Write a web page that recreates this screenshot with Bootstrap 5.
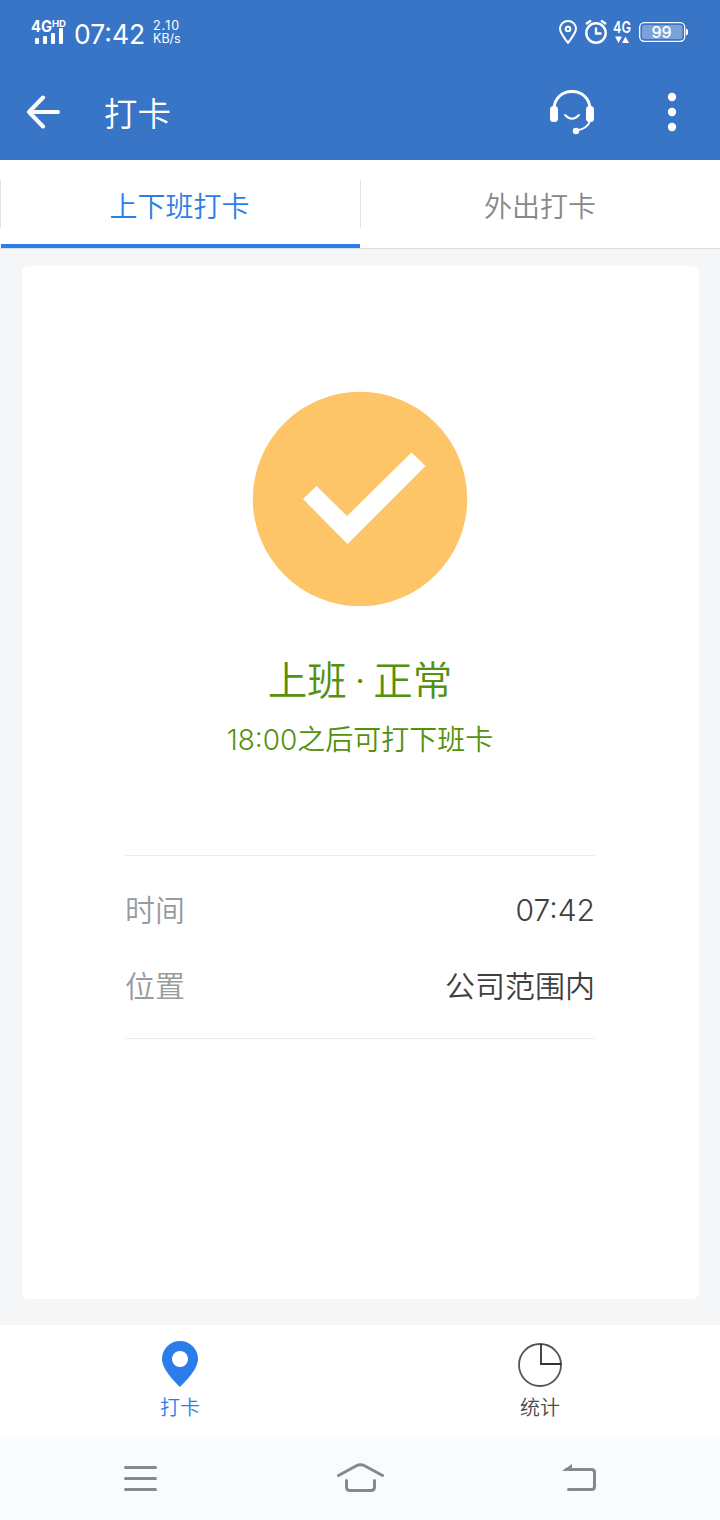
<!DOCTYPE html>
<html lang="zh-CN">
<head>
<meta charset="utf-8">
<meta name="viewport" content="width=device-width, initial-scale=1">
<title>打卡</title>
<link href="https://cdn.jsdelivr.net/npm/bootstrap@5.3.0/dist/css/bootstrap.min.css" rel="stylesheet">
<style>
  body { font-family: Inter, "Noto Sans CJK SC", sans-serif; font-weight: 350; line-height: 1; background: #f4f6f8; height: 1520px; overflow: hidden; }
  svg { display: block; flex: none; }
  .top-blue { background: #3975c6; color: #fff; }
  .status { height: 64px; padding: 0 31px; }
  .clock { font-size: 26.5px; font-weight: 400; line-height: 32px; margin-left: 7px; width: 79px; white-space: nowrap; }
  .speed { font-size: 12.5px; font-weight: 400; line-height: 13px; }
  .speed .rate { letter-spacing: 1px; }
  .title-bar { height: 96px; padding: 0 43px 0 27px; }
  .title-text { font-size: 33.5px; line-height: 40px; margin: 4px 0 0 44px; }
  .tabs { height: 89px; border-bottom: 1px solid #dcdddf; font-size: 28px; }
  .tab-item { height: 88px; padding-top: 2px; line-height: 90px; border-bottom: 4px solid transparent; color: #888; }
  .tab-item.on { color: #2b7de9; border-color: #2b7de9; margin-left: 1px; padding-right: 2px; }
  .tab-item.on { width: 359px; }
  .tabs .sep { width: 1px; height: 48px; background: #e3e3e3; margin-top: 20px; }
  .result { margin: 17px 21px 0 22px; height: 1033px; border-radius: 6px; padding: 125px 104px 0 103px; }
  .headline { font-size: 39.5px; line-height: 48px; margin-top: 51px; color: #53910f; word-spacing: -3.5px; }
  .hint { font-size: 28px; line-height: 36px; margin-top: 17px; color: #53910f; white-space: nowrap; }
  .facts { border-top: 1px solid #ececec; border-bottom: 1px solid #ececec; margin-top: 97px; height: 184px; padding-top: 34px; font-size: 30px; line-height: 40px; gap: 36px; color: #3f3f42; }
  .facts .key { color: #979b9d; }
  .bottom-tabs { margin-top: 26px; height: 111px; font-size: 20px; line-height: 24px; color: #4b4b4b; }
  .bottom-tabs .on { color: #2b7de9; }
  .bottom-tabs .pic { height: 71px; padding-top: 16px; }
  .sys { height: 84px; background: #f9fcfe; padding: 0 122px; }
</style>
</head>
<body>
<header class="top-blue">
  <div class="status d-flex align-items-center">
    <svg width="36" height="30" viewBox="31 16 36 30" fill="#fff">
      <text x="31" y="31" font-size="16" font-weight="700" textLength="21" lengthAdjust="spacingAndGlyphs">4G</text>
      <text x="52" y="26" font-size="9" font-weight="700" textLength="14" lengthAdjust="spacingAndGlyphs">HD</text>
      <rect x="35" y="37" width="4" height="6" rx="1"/><rect x="43" y="35" width="4" height="8" rx="1"/><rect x="51" y="32" width="4" height="11" rx="1"/><rect x="59" y="27" width="4" height="16" rx="1"/>
    </svg>
    <div class="clock mt-1">07:42</div>
    <div class="speed"><div class="rate">2.10</div><div>KB/s</div></div>
    <svg class="ms-auto" width="132" height="28" viewBox="557 18 132 28" fill="none" stroke="#fff" stroke-width="2">
      <path d="M568 43C564 37 560 33 560 28.500A8 7.500 0 0 1 576 28.500C576 33 572 37 568 43Z" stroke-linejoin="round"/>
      <circle cx="568" cy="29" r="2.300"/>
      <circle cx="596" cy="33" r="9.700" stroke-width="2.500"/><path d="M596 27.500V33.500H601.500M586 24L591 20.500M606 24L601 20.500" stroke-width="2.300"/>
      <g fill="#fff" stroke="none"><text x="613" y="33" font-size="16" font-weight="600" textLength="18" lengthAdjust="spacingAndGlyphs">4G</text><path d="M615 36.500h7l-3.500 6.500zM622 43h7l-3.500-6.500z"/></g>
      <rect x="639.700" y="22.700" width="45" height="18.600" rx="4.500" stroke-width="1.300"/><rect x="642" y="25" width="40.500" height="14" rx="2.500" fill="#7ba1d9" stroke="none"/>
      <path d="M686 28.500q2.500 1 2 3.500q.5 2.500-2 3.500z" fill="#fff" stroke="none"/>
      <text x="651.500" y="38" font-size="16" fill="#fff" stroke="none" font-weight="500" textLength="20">99</text>
    </svg>
  </div>
  <div class="title-bar d-flex align-items-center">
    <svg width="33" height="34" viewBox="0 0 33 34" fill="none" stroke="#fff" stroke-width="4" stroke-linecap="round" stroke-linejoin="round"><path d="M31 17H2M16 2.500L2 17L16 31.500"/></svg>
    <div class="title-text">打卡</div>
    <svg class="ms-auto" width="46" height="46" viewBox="549 89 46 46" fill="none" stroke="#fff">
      <path d="M554 108C555 98 562 91.500 572 91.500S589 98 590 108" stroke-width="3"/>
      <rect x="550" y="106" width="8" height="16" rx="3.500" fill="#fff" stroke="none"/><rect x="586" y="106" width="8" height="16" rx="3.500" fill="#fff" stroke="none"/>
      <path d="M565 115Q572 122.500 579 115" stroke-width="2" stroke-linecap="round"/><path d="M590 121C588 127 584 129.500 576 130.500" stroke-width="2"/><circle cx="576" cy="131" r="3.200" fill="#fff" stroke="none"/>
    </svg>
    <svg class="more" style="margin-left:72px" width="10" height="40" fill="#fff"><circle cx="5" cy="5" r="4.200"/><circle cx="5" cy="20" r="4.200"/><circle cx="5" cy="35" r="4.200"/></svg>
  </div>
</header>
<nav class="tabs d-flex bg-white text-center position-relative">
  <div class="sep position-absolute start-0"></div>
  <div class="tab-item on flex-shrink-0">上下班打卡</div>
  <div class="sep position-absolute start-50"></div>
  <div class="tab-item flex-fill">外出打卡</div>
</nav>
<main class="result bg-white text-center">
  <svg class="mx-auto" width="216" height="215" viewBox="252 391 216 215"><circle cx="360" cy="499" r="107.200" fill="#fec568"/><path d="M303 499L316.500 486L347 516L411.500 452.500L425.500 466L347.500 544Z" fill="#fff"/></svg>
  <div class="headline">上班 · 正常</div>
  <div class="hint">18:00之后可打下班卡</div>
  <div class="facts d-flex flex-column">
    <div class="d-flex justify-content-between"><span class="key">时间</span><span>07:42</span></div>
    <div class="d-flex justify-content-between"><span class="key">位置</span><span>公司范围内</span></div>
  </div>
</main>
<div class="bottom-tabs d-flex bg-white text-center">
  <div class="w-50 on"><div class="pic"><svg class="mx-auto" width="36" height="46" viewBox="0 0 36 46"><path fill-rule="evenodd" fill="#2b7de9" d="M18 46C12 40 0 28 0 18A18 18 0 0 1 36 18C36 28 24 40 18 46ZM18 10a8 8 0 1 0 .01 0Z"/></svg></div>打卡</div>
  <div class="w-50"><div class="pic"><svg class="mx-auto" width="46" height="46" viewBox="517 1341 46 46" fill="none" stroke="#555" stroke-width="1.800"><circle cx="540" cy="1365" r="21"/><path d="M541 1344V1364H561.500" stroke="#333"/></svg></div>统计</div>
</div>
<footer class="sys d-flex align-items-center justify-content-between">
  <svg width="36" height="32" viewBox="122 1462 36 32" stroke="#888" stroke-width="3" stroke-linecap="round"><path d="M125.500 1467.500H155.500M125.500 1478.500H155.500M125.500 1489.500H155.500"/></svg>
  <svg width="50" height="32" viewBox="334 1462 50 32" fill="none" stroke="#888" stroke-width="3" stroke-linecap="round"><path d="M338.500 1475.500L356 1466Q360.500 1463.500 365 1466L382.500 1475.500M346.500 1480.500V1487Q346.500 1490.500 350 1490.500H371Q374.500 1490.500 374.500 1487V1480.500"/></svg>
  <svg width="38" height="32" viewBox="560 1462 38 32" fill="none" stroke="#888" stroke-width="3" stroke-linecap="round"><path d="M566 1469.500H591.500Q594.500 1469.500 594.500 1472.500V1486.500Q594.500 1489.500 591.500 1489.500H568.500"/><path d="M562 1471L572 1464V1471Z" fill="#888" stroke="none"/></svg>
</footer>
<script src="https://cdn.jsdelivr.net/npm/bootstrap@5.3.0/dist/js/bootstrap.bundle.min.js"></script>
</body>
</html>
